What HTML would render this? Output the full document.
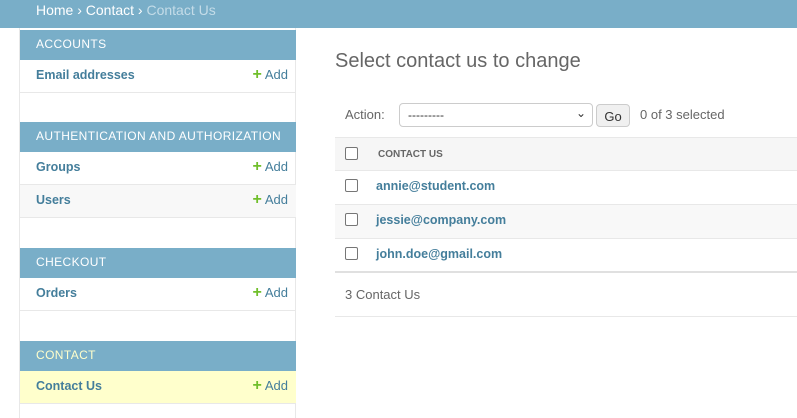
<!DOCTYPE html>
<html><head><style>
*{box-sizing:border-box;margin:0;padding:0}
body{width:797px;height:412px;overflow:hidden;background:#fff;font-family:"Liberation Sans",Arial,sans-serif;position:relative;color:#333}
.hdr{position:absolute;left:0;top:0;width:797px;height:28px;background:#79aec8;color:#fff;font-size:14px;padding:2px 0 0 36px}
.hdr .cur{color:#c4dce8}
.side{position:absolute;left:19px;top:28px;width:277px;height:390px;border-left:1px solid #e8e8e8;border-right:1px solid #e8e8e8}
.cap{position:absolute;left:0;width:276px;height:30px;background:#79aec8;color:#fff;font-size:12px;letter-spacing:.4px;padding:7px 0 0 16px}
.row{position:absolute;left:0;width:276px;height:33px;border-bottom:1px solid #e8e8e8;font-size:12.5px;font-weight:bold;color:#447e9b;padding:8px 0 0 16px}
.row .add{position:absolute;right:8px;top:6px;font-weight:normal;color:#447e9b;font-size:13px}
.row .add b{color:#70bf2b;font-size:16px;margin-right:3px}
.main{position:absolute;left:335px}
.tr{position:absolute;left:335px;width:462px;height:34px;border-bottom:1px solid #e8e8e8;font-size:12.5px}
.cb{position:absolute;left:10px;top:8px;width:13px;height:13px;border:1px solid #767676;border-radius:2px;background:#fff}
.tr a{position:absolute;left:41px;top:8px;color:#447e9b;font-weight:bold}
</style></head><body>
<div class="hdr">Home › Contact › <span class="cur">Contact Us</span></div>
<div class="side">
<div class="cap" style="top:2px">ACCOUNTS</div>
<div class="row" style="top:32px">Email addresses<span class="add"><b>+</b>Add</span></div>
<div class="cap" style="top:94px">AUTHENTICATION AND AUTHORIZATION</div>
<div class="row" style="top:124px">Groups<span class="add"><b>+</b>Add</span></div>
<div class="row" style="top:157px;background:#f8f8f8">Users<span class="add"><b>+</b>Add</span></div>
<div class="cap" style="top:220px">CHECKOUT</div>
<div class="row" style="top:250px">Orders<span class="add"><b>+</b>Add</span></div>
<div class="cap" style="top:313px;color:#ffffcc">CONTACT</div>
<div class="row" style="top:343px;background:#ffffcc">Contact Us<span class="add"><b>+</b>Add</span></div>
</div>
<div class="main" style="top:50px;font-size:20px;font-weight:300;color:#666">Select contact us to change</div>
<div class="main" style="top:107px;left:345px;font-size:13px;color:#666">Action:</div>
<div class="main" style="top:103px;left:399px;width:194px;height:24px;border:1px solid #ccc;border-radius:4px;font-size:12px;padding:4px 8px">---------<span style="position:absolute;right:6px;top:2px;font-size:12px">⌄</span></div>
<div class="main" style="top:104px;left:596px;width:34px;height:23px;border:1px solid #ccc;border-radius:4px;background:#f0f0f0;font-size:13px;text-align:center;padding-top:4px">Go</div>
<div class="main" style="top:107px;left:640px;font-size:13px;color:#666">0 of 3 selected</div>
<div class="tr" style="top:137px;background:#f6f6f6;border-top:1px solid #e8e8e8"><span class="cb" style="top:9px"></span><span style="position:absolute;left:43px;top:11px;font-size:10px;font-weight:bold;color:#666">CONTACT US</span></div>
<div class="tr" style="top:171px"><span class="cb"></span><a>annie@student.com</a></div>
<div class="tr" style="top:205px;background:#f8f8f8"><span class="cb"></span><a>jessie@company.com</a></div>
<div class="tr" style="top:239px;border-bottom:2px solid #e0e0e0"><span class="cb"></span><a>john.doe@gmail.com</a></div>
<div class="tr" style="top:273px;height:44px"><span style="position:absolute;left:10px;top:14px;color:#666;font-size:13px">3 Contact Us</span></div>
</body></html>
